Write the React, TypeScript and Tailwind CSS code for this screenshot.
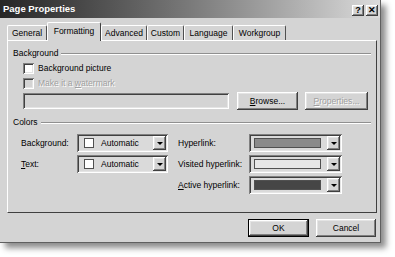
import React from "react";

const raised =
  "shadow-[inset_-1px_-1px_#404040,inset_1px_1px_#ffffff,inset_-2px_-2px_#808080,inset_2px_2px_#e4e4e4]";
const sunken =
  "shadow-[inset_1px_1px_#808080,inset_-1px_-1px_#ffffff,inset_2px_2px_#404040,inset_-2px_-2px_#e4e4e4]";

function Legend({ text }: { text: string }) {
  return (
    <div className="flex items-center h-[13px] gap-[3px]">
      <span className="leading-[13px]">{text}</span>
      <div className="flex-1 h-[2px] border-t border-t-[#909090] border-b border-b-white mt-[1px]" />
    </div>
  );
}

function Check({ label, disabled }: { label: React.ReactNode; disabled?: boolean }) {
  return (
    <div className="flex items-center gap-[4px] h-[15px]">
      <div className={`w-[11px] h-[11px] ${disabled ? "bg-[#d4d4d4]" : "bg-white"} ${sunken}`} />
      <span className={disabled ? "text-[#a0a0a0] [text-shadow:1px_1px_0_#ffffff]" : ""}>{label}</span>
    </div>
  );
}

function Arrow() {
  return (
    <div className={`w-[13px] h-[14px] bg-[#d4d4d4] flex items-center justify-center ${raised}`}>
      <div className="w-0 h-0 border-l-[3px] border-r-[3px] border-t-[3px] border-l-transparent border-r-transparent border-t-black mt-[1px]" />
    </div>
  );
}

function AutoCombo() {
  return (
    <div className={`w-[91px] h-[18px] bg-[#dadada] flex items-center p-[2px] ${sunken}`}>
      <div className="flex-1 flex items-center h-full pl-[5px]">
        <div className="w-[10px] h-[10px] bg-white border border-[#505050]" />
        <span className="ml-[7px]">Automatic</span>
      </div>
      <Arrow />
    </div>
  );
}

function SwatchCombo({ color }: { color: string }) {
  return (
    <div className={`w-[93px] h-[18px] bg-[#dadada] flex items-center p-[2px] ${sunken}`}>
      <div className="flex-1 flex items-center h-full px-[3px]">
        <div className="w-full h-[10px] border border-[#505050]" style={{ background: color }} />
      </div>
      <div className="w-[3px]" />
      <Arrow />
    </div>
  );
}

function Button({
  children,
  w,
  disabled,
  def,
}: {
  children: React.ReactNode;
  w: string;
  disabled?: boolean;
  def?: boolean;
}) {
  return (
    <div className={`${w} h-[18px] flex ${def ? "border border-black" : ""}`}>
      <div
        className={`flex-1 flex items-center justify-center bg-[#d4d4d4] ${raised} ${
          disabled ? "text-[#a0a0a0] [text-shadow:1px_1px_0_#ffffff]" : ""
        }`}
      >
        {children}
      </div>
    </div>
  );
}

const tabs = [
  { t: "General", w: "w-[40px]" },
  { t: "Formatting", w: "w-[54px]", sel: true },
  { t: "Advanced", w: "w-[46px]" },
  { t: "Custom", w: "w-[37px]" },
  { t: "Language", w: "w-[49px]" },
  { t: "Workgroup", w: "w-[53px]" },
];

export default function App() {
  return (
    <div
      className="w-[395px] h-[257px] bg-white text-[8.5px] text-black leading-none"
      style={{ fontFamily: '"Liberation Sans", Arial, sans-serif' }}
    >
      <div className="w-[381px] h-[243px] bg-[#d4d4d4] flex flex-col shadow-[5px_5px_6px_rgba(0,0,0,0.45)] border-r border-b border-r-[#606060] border-b-[#606060]">
        {/* Title bar */}
        <div className="h-[18px] flex items-center bg-gradient-to-r from-[#262626] via-[#7a7a7a] to-[#dcdcdc] pl-[3px] pr-[2px]">
          <span className="text-white font-bold text-[9.5px] flex-1">Page Properties</span>
          <div className="flex gap-[2px] mt-[2px]">
            <div className={`w-[12px] h-[11px] bg-[#d4d4d4] flex items-center justify-center font-bold text-[9px] ${raised}`}>?</div>
            <div className={`w-[12px] h-[11px] bg-[#d4d4d4] flex items-center justify-center font-bold text-[9px] ${raised}`}>✕</div>
          </div>
        </div>

        {/* Tabs */}
        <div className="flex items-end h-[18px] mt-[4px] pl-[7px] relative z-10">
          {tabs.map((tb) =>
            tb.sel ? (
              <div
                key={tb.t}
                className={`${tb.w} h-[19px] -mb-[1px] bg-[#d4d4d4] border-t border-l border-white border-r border-r-[#404040] rounded-t-[2px] flex items-start justify-center pt-[4px]`}
              >
                {tb.t}
              </div>
            ) : (
              <div
                key={tb.t}
                className={`${tb.w} h-[15px] border-t border-l border-white border-r border-r-[#505050] rounded-t-[2px] flex items-start justify-center pt-[3px]`}
              >
                {tb.t}
              </div>
            )
          )}
        </div>

        {/* Panel */}
        <div className="ml-[7px] w-[370px] h-[173px] border-t border-l border-white border-r border-b border-r-[#404040] border-b-[#404040] flex flex-col pt-[6px] pl-[5px] pr-[5px]">
          <Legend text="Background" />
          <div className="pl-[10px] flex flex-col mt-[1px]">
            <Check label="Background picture" />
            <Check
              disabled
              label={
                <>
                  Make it a <u>w</u>atermark
                </>
              }
            />
            <div className="flex items-center mt-[1px]">
              <div className={`w-[206px] h-[16px] bg-[#d4d4d4] ${sunken}`} />
              <div className="ml-[8px]">
                <Button w="w-[61px]">
                  <span>
                    <u>B</u>rowse...
                  </span>
                </Button>
              </div>
              <div className="ml-[7px]">
                <Button w="w-[63px]" disabled>
                  <span>
                    <u>P</u>roperties...
                  </span>
                </Button>
              </div>
            </div>
          </div>
          <div className="mt-[6px]">
            <Legend text="Colors" />
          </div>
          <div className="grid grid-cols-[56px_91px_81px_93px_auto] gap-y-[3px] items-center pl-[8px] mt-[5px]">
            <span>Background:</span>
            <AutoCombo />
            <span className="pl-[10px]">Hyperlink:</span>
            <SwatchCombo color="#8a8a8a" />
            <span />
            <span>
              <u>T</u>ext:
            </span>
            <AutoCombo />
            <span className="pl-[10px] whitespace-nowrap">Visited hyperlink:</span>
            <SwatchCombo color="#e6e6e6" />
            <span />
            <span />
            <span />
            <span className="pl-[10px] whitespace-nowrap">
              <u>A</u>ctive hyperlink:
            </span>
            <SwatchCombo color="#464646" />
            <span />
          </div>
        </div>

        {/* Buttons */}
        <div className="flex justify-end gap-[7px] pr-[4px] mt-[6px]">
          <Button w="w-[61px]" def>
            OK
          </Button>
          <Button w="w-[60px]">Cancel</Button>
        </div>
      </div>
    </div>
  );
}
